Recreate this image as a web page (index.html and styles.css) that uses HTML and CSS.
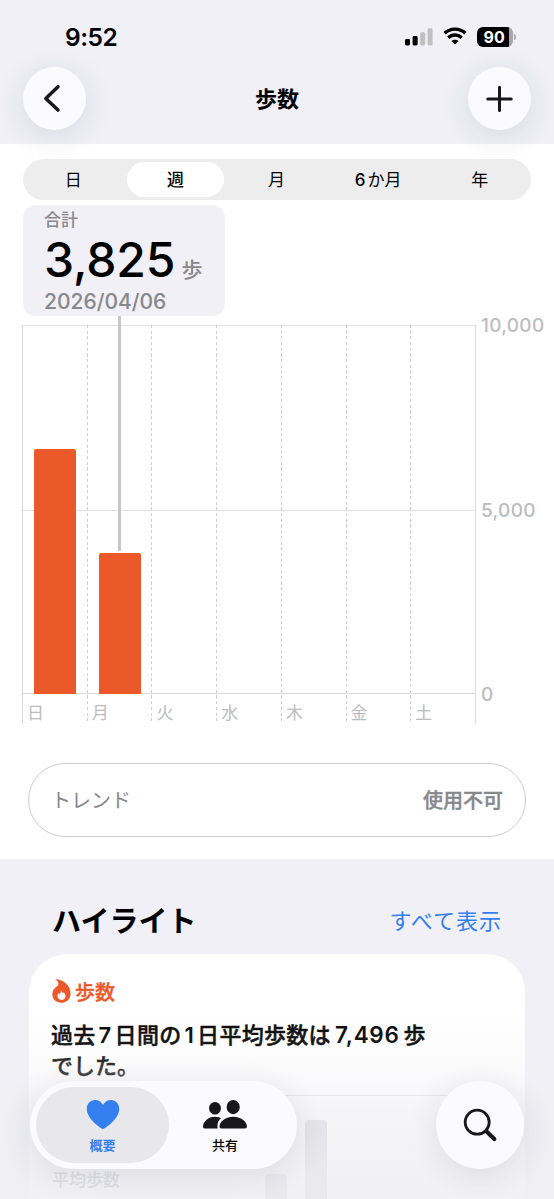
FILE: index.html
```html
<!DOCTYPE html>
<html lang="ja">
<head>
<meta charset="utf-8">
<title>歩数</title>
<link rel="stylesheet" href="styles.css">
</head>
<body>
<div class="app">
  <header class="header">
    <div class="status">
      <span class="time">9:52</span>
      <div class="status-icons">
        <svg class="signal" width="28" height="18" viewBox="0 0 28 18">
          <rect x="0" y="11" width="5" height="6.5" rx="1.4"/>
          <rect x="7.6" y="8" width="5" height="9.5" rx="1.4"/>
          <rect class="off" x="15.2" y="4.2" width="5" height="13.3" rx="1.4"/>
          <rect class="off" x="22.6" y="0.3" width="5" height="17.2" rx="1.4"/>
        </svg>
        <svg class="wifi" width="24" height="18" viewBox="0 0 24 18">
          <path d="M1.6 6.3C7.4.7 16.6.7 22.4 6.3" />
          <path d="M5.3 10.7c3.8-3.6 9.6-3.6 13.4 0" />
          <path class="dot" d="M12 17.6l-3.6-3.6c2-1.8 5.2-1.8 7.2 0z"/>
        </svg>
        <div class="battery"><span class="battery-level">90</span><span class="battery-cap"></span></div>
      </div>
    </div>
    <nav class="navbar">
      <button class="round"><svg width="63" height="63" viewBox="0 0 63 63"><path d="M35 19.7 22.8 31.4 35 43.1" stroke-width="3.5"/></svg></button>
      <h1 class="title">歩数</h1>
      <button class="round"><svg width="63" height="63" viewBox="0 0 63 63"><path d="M31.5 20.2v23.4M19.8 31.9h23.4" stroke-width="3"/></svg></button>
    </nav>
  </header>

  <main>
    <div class="segments">
      <span class="segment">日</span>
      <span class="segment active">週</span>
      <span class="segment">月</span>
      <span class="segment"><span class="six">6</span>か月</span>
      <span class="segment">年</span>
    </div>

    <section class="callout">
      <div class="callout-label">合計</div>
      <div class="callout-value">3,825<span class="unit">歩</span></div>
      <div class="callout-date">2026/04/06</div>
    </section>

    <section class="chart">
      <div class="plot">
        <div class="day"><div class="track"><div class="bar" style="height:245px"></div></div><span class="day-name">日</span></div>
        <div class="day"><div class="track"><div class="bar" style="height:140.5px"></div><i class="marker"></i></div><span class="day-name">月</span></div>
        <div class="day"><div class="track"></div><span class="day-name">火</span></div>
        <div class="day"><div class="track"></div><span class="day-name">水</span></div>
        <div class="day"><div class="track"></div><span class="day-name">木</span></div>
        <div class="day"><div class="track"></div><span class="day-name">金</span></div>
        <div class="day"><div class="track"></div><span class="day-name">土</span></div>
      </div>
      <div class="axis"><span>10,000</span><span>5,000</span><span>0</span></div>
    </section>

    <div class="trend"><span>トレンド</span><b>使用不可</b></div>

    <section class="highlights">
      <div class="section-head"><h2>ハイライト</h2><a class="more">すべて表示</a></div>
      <article class="card">
        <div class="card-kind">
          <svg width="19" height="24" viewBox="0 0 19 24">
            <path d="M3.3.3C10.5.2 18.600 6 18.600 14.400c0 5.500-3.900 9.300-9.300 9.300C3.900 23.700.3 20.200.3 15.300c0-3.600 1.700-5.900 4.200-7.600 1.200-.8 1.900-1.500 1.900-2.900C6.400 3 5.200 1.500 3.300.3z"/>
            <path class="flame-core" d="M9 10.800c.3 1.600 1 2.500 2.100 3.500.4-.3.6-.8.5-1.400 1.100 1.100 1.900 2.600 1.900 4 0 2.500-1.600 4-4 4s-4-1.600-4-3.900c0-1.200.5-2.100 1.100-2.900.1.700.4 1.100.9 1.500 1-1.300 1.500-2.900 1.500-4.800z"/>
          </svg>
          <span>歩数</span>
        </div>
        <p class="card-text"><span class="lead">過去<em>7</em>日間の<em>1</em>日平均歩数は<em class="figure">7,496</em>歩</span><br>でした。</p>
        <div class="card-body">
          <span class="average">平均歩数</span>
          <div class="mini mini-short"></div>
          <div class="mini"></div>
        </div>
      </article>
    </section>
  </main>

  <footer class="dock">
    <nav class="tabs">
      <a class="tab selected">
        <svg width="34" height="31" viewBox="0 0 34 31"><path d="M17 30.3C14 28.7.8 20 .8 9.8.8 4.7 4.4.9 9 .9c3.500 0 6.500 1.900 8 5 1.500-3.100 4.500-5 8-5 4.600 0 8.200 3.800 8.200 8.900C33.200 20 20 28.700 17 30.300z"/></svg>
        <span>概要</span>
      </a>
      <a class="tab">
        <svg width="46" height="31" viewBox="0 0 46 31">
          <ellipse cx="13" cy="9.3" rx="5.9" ry="6.3"/>
          <path d="M17 18.3c-8.5-2.7-16 3.3-16 9.4 0 1.100.6 1.700 1.700 1.700H15.700c-.5-4.500-.1-7.300 3.300-10.100z"/>
          <ellipse cx="31.2" cy="8.1" rx="6.6" ry="7.1"/>
          <path d="M31.2 17.8c-8.500 0-13.700 5.200-13.700 9.700 0 1.300.7 1.900 2 1.900h23.400c1.300 0 2-.6 2-1.900 0-4.500-5.200-9.700-13.700-9.700z"/>
        </svg>
        <span>共有</span>
      </a>
    </nav>
    <button class="search"><svg width="88" height="88" viewBox="0 0 88 88"><circle cx="41.2" cy="41.2" r="12" stroke-width="2.8"/><path d="M50.3 50.3 58.3 58" stroke-width="4.2"/></svg></button>
  </footer>
</div>
</body>
</html>
```
FILE: styles.css
```css
* { box-sizing: border-box; }
body {
  margin: 0;
  background: #fff;
  color: #000;
  font-family: Inter, "Noto Sans CJK JP", sans-serif;
}
h1, h2, p { margin: 0; }
button { border: 0; padding: 0; }
svg { display: block; }

.app { position: relative; height: 1199px; overflow: hidden; }

/* Header */
.header { height: 144px; background: #f0f0f6; }
.status {
  display: flex;
  justify-content: space-between;
  height: 67px;
  padding: 22px 38px 0 65px;
}
.time { font-size: 24.5px; font-weight: 600; line-height: 30px; letter-spacing: -0.5px; }
.status-icons { display: flex; align-items: flex-start; padding-top: 5px; }
.signal { margin-top: 1px; }
.signal .off { fill: #bfbfc4; }
.wifi { margin: 0 10px 0 10.5px; fill: none; stroke: #000; stroke-width: 3.3; }
.wifi .dot { fill: #000; stroke: none; }
.battery { display: flex; align-items: center; gap: 1px; }
.battery-level {
  width: 36px;
  height: 20px;
  border-radius: 6px;
  background: linear-gradient(90deg, #000 32.5px, #a5a5aa 32.5px);
  color: #fff;
  font-size: 16px;
  font-weight: 700;
  line-height: 20px;
  padding-left: 6.5px;
}
.battery-cap { width: 2px; height: 6px; border-radius: 0 2px 2px 0; background: #b0b0b5; }

.navbar { display: flex; justify-content: space-between; padding: 0 23px; }
.round, .search {
  border-radius: 50%;
  background: #fbfbff;
  box-shadow: 0 6px 32px rgba(40, 40, 60, .11);
}
.round { position: relative; width: 63px; height: 63px; }
.round svg, .search svg { fill: none; stroke: #18181b; stroke-linecap: round; stroke-linejoin: round; }
.title { font-size: 22px; font-weight: 700; line-height: 65px; }

/* Period selector */
.segments {
  display: flex;
  height: 41px;
  margin: 15px 23px 0;
  padding: 3px 0;
  border-radius: 21px;
  background: #ededee;
}
.segment { width: 101.6px; padding-right: 1px; text-align: center; font-size: 17px; font-weight: 400; line-height: 36px; }
.segment.active { width: 97px; margin: 0 2.3px; padding-right: 0; border-radius: 18px; background: #fff; font-weight: 500; }
.six { margin-right: 2px; font-weight: 500; }

/* Selected value */
.callout {
  width: 202px;
  height: 111px;
  margin: 5px 0 0 23px;
  padding: 4px 0 0 21px;
  border-radius: 13px;
  background: #f0f0f6;
  color: #87878c;
}
.callout-label { font-size: 17px; font-weight: 500; line-height: 22px; }
.callout-value { height: 58px; color: #000; font-size: 48px; font-weight: 500; line-height: 57px; letter-spacing: -.1px; white-space: nowrap; }
.unit { margin-left: 6px; color: #87878c; font-size: 21px; }
.callout-date { font-size: 21px; font-weight: 500; line-height: 25px; }

/* Chart */
.chart { display: flex; height: 399px; margin: 9px 0 0 22px; }
.plot {
  display: flex;
  width: 454px;
  border-right: 1px solid #dedee0;
  background:
    linear-gradient(#e2e2e4, #e2e2e4) 0 0 / 100% 1px no-repeat,
    linear-gradient(#e2e2e4, #e2e2e4) 0 185px / 100% 1px no-repeat,
    linear-gradient(#dadadc, #dadadc) 0 368px / 100% 1px no-repeat;
}
.day {
  flex: 1;
  background: repeating-linear-gradient(#cdcdd0 0 3px, transparent 3px 5.7px) 0 0 / 1px 100% no-repeat;
}
.day:first-child { background: linear-gradient(#d9d9dc, #d9d9dc) 0 0 / 1px 100% no-repeat; }
.track { position: relative; display: flex; align-items: flex-end; height: 368.5px; padding-left: 12px; }
.bar { width: 42px; border-radius: 2px 2px 0 0; background: #eb592a; }
.marker { position: absolute; left: 31px; top: -9px; width: 3px; height: 235px; background: #c7c7c9; }
.day-name { display: block; padding-left: 5px; color: #bcbcc0; font-size: 17px; line-height: 38px; }
.axis {
  display: flex;
  flex-direction: column;
  justify-content: space-between;
  height: 393px;
  margin: -11px 0 0 5px;
  color: #bcbcc0;
  font-size: 19px;
  font-weight: 450;
  line-height: 24px;
  letter-spacing: .3px;
}

/* Trend */
.trend {
  display: flex;
  justify-content: space-between;
  height: 74px;
  margin: 39px 28px 0;
  padding: 0 22px 0 22px;
  border: 1.5px solid #cdcdd1;
  border-radius: 37px;
  color: #87878c;
  font-size: 20px;
  line-height: 74px;
}
.trend b { font-weight: 500; -webkit-text-stroke: .4px; }

/* Highlights */
.highlights { height: 340px; margin-top: 22px; padding: 37px 29px 0; background: #f0f0f6; }
.section-head { display: flex; justify-content: space-between; height: 58px; padding: 0 23px; line-height: 50px; }
.section-head h2 { font-size: 29px; line-height: 52px; }
.more { color: #347ff0; font-size: 22px; letter-spacing: 1px; }
.card { height: 300px; padding: 25px 23px 0; border-radius: 38px; background: #fff; }
.card-kind { display: flex; align-items: center; gap: 4px; height: 24px; color: #eb592a; font-size: 20px; font-weight: 500; -webkit-text-stroke: .4px; }
.card-kind svg { fill: #eb592a; }
.card-kind .flame-core { fill: #fff; }
.card-text { margin: 16px 0 0 -1px; font-size: 22px; font-weight: 500; line-height: 31px; white-space: nowrap; -webkit-text-stroke: .45px; }
.lead { letter-spacing: .3px; }
.card-text em { margin: 0 3px; font-style: normal; font-weight: 600; -webkit-text-stroke: 0; }
.card-text .figure { margin: 0 4px 0 4px; font-size: 22.5px; letter-spacing: .7px; }
.card-body { position: relative; display: flex; align-items: flex-start; height: 150px; margin-top: 13px; border-top: 1px solid #e2e2e5; }
.average { width: 213px; padding-top: 72px; color: #a2a2a6; font-size: 17px; font-weight: 500; line-height: 24px; }
.mini { width: 22px; height: 120px; margin: 24px 18px 0 0; border-radius: 4px; background: #d4d4da; }
.mini-short { margin-top: 78px; }

/* Floating dock */
.dock {
  position: absolute;
  inset: auto 0 0 0;
  display: flex;
  justify-content: space-between;
  height: 199px;
  padding: 81px 30px 0;
  background: linear-gradient(rgba(238, 238, 243, 0), rgba(238, 238, 243, .12) 26%, rgba(238, 238, 243, .55) 55%, rgba(238, 238, 243, .8) 90%);
}
.tabs {
  display: flex;
  width: 267px;
  height: 88px;
  padding: 6px;
  border-radius: 44px;
  background: #fbfbff;
  box-shadow: 0 6px 32px rgba(40, 40, 60, .11);
}
.tab {
  display: flex;
  flex-direction: column;
  align-items: center;
  width: 133px;
  height: 76px;
  padding-top: 12px;
  border-radius: 38px;
  font-size: 13px;
  font-weight: 500;
  line-height: 18px;
}
.tab + .tab { width: 112px; }
.tab span { margin-top: 6px; }
.tab svg { fill: #18181b; }
.selected { background: #e8e8ec; color: #347ff0; font-weight: 700; }
.selected svg { fill: #347ff0; }
.search { width: 88px; height: 88px; }
```
